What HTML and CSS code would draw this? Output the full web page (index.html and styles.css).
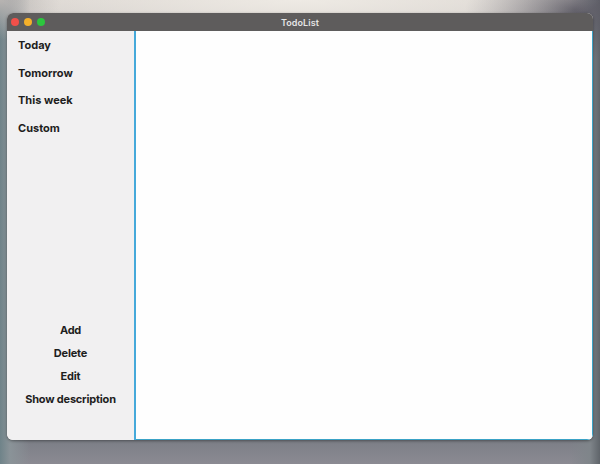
FILE: index.html
```html
<!DOCTYPE html>
<html>
<head>
<meta charset="utf-8">
<link rel="stylesheet" href="styles.css">
</head>
<body>
<div class="window">
  <div class="titlebar">
    <div class="lights">
      <span class="light red"></span>
      <span class="light yellow"></span>
      <span class="light green"></span>
    </div>
    <div class="title">TodoList</div>
  </div>
  <div class="main">
    <aside class="sidebar">
      <ul class="filters">
        <li>Today</li>
        <li>Tomorrow</li>
        <li>This week</li>
        <li>Custom</li>
      </ul>
      <ul class="actions">
        <li>Add</li>
        <li>Delete</li>
        <li>Edit</li>
        <li>Show description</li>
      </ul>
    </aside>
    <section class="content"></section>
  </div>
</div>
</body>
</html>
```

FILE: styles.css
```css
html, body {
  margin: 0;
  padding: 0;
  height: 100%;
}
body {
  width: 600px;
  height: 464px;
  overflow: hidden;
  background:
    radial-gradient(ellipse 300px 40px at 300px 0px, #eeeae4 0%, rgba(238,234,228,0) 100%),
    radial-gradient(ellipse 110px 50px at 575px 10px, #5e5c66 0%, rgba(94,92,102,0) 100%),
    radial-gradient(ellipse 60px 40px at 0px 0px, #b8b4b2 0%, rgba(184,180,178,0) 100%),
    linear-gradient(90deg, #6f8389 0px, #8a9398 10px, rgba(138,147,152,0) 30px),
    linear-gradient(270deg, #5f646a 0px, #7f858a 10px, rgba(127,133,138,0) 30px),
    linear-gradient(180deg, #dcd7d2 0%, #c4c2c2 15%, #9ea2a6 50%, #8a8f94 85%, #7c7f87 95%, #8b8a92 100%);
  font-family: "Inter", "Open Sans", "Liberation Sans", sans-serif;
  padding: 13px 7px 0 7px;
  box-sizing: border-box;
}
.window {
  width: 586px;
  height: 427px;
  border-radius: 6px;
  overflow: hidden;
  display: flex;
  flex-direction: column;
  box-shadow: 0 1px 3px rgba(0,0,0,0.4);
  background: #f0eff0;
}
.titlebar {
  height: 18px;
  flex: none;
  background: #5e5c5c;
  position: relative;
  display: flex;
  align-items: center;
}
.lights {
  display: flex;
  gap: 5px;
  padding-left: 4px;
}
.light {
  width: 8px;
  height: 8px;
  border-radius: 50%;
  display: block;
}
.red { background: #f0504a; }
.yellow { background: #f4b02a; }
.green { background: #2cc63e; }
.title {
  position: absolute;
  left: 0;
  right: 0;
  text-align: center;
  color: #e4e4e4;
  font-size: 9px;
  font-weight: 600;
  top: 4px;
  letter-spacing: 0.1px;
}
.main {
  flex: 1;
  display: flex;
  min-height: 0;
}
.sidebar {
  width: 127px;
  flex: none;
  background: #f1f0f1;
  display: flex;
  flex-direction: column;
  justify-content: space-between;
  border-right: 2px solid #45a9da;
}
.sidebar ul {
  list-style: none;
  margin: 0;
  padding: 0;
  color: #1e1e1e;
  font-weight: 700;
  font-size: 11px;
}
.filters {
  padding-left: 11px !important;
  padding-top: 1px !important;
}
.filters li {
  height: 27.5px;
  line-height: 27.5px;
}
.actions {
  text-align: center;
  padding-bottom: 29px !important;
  letter-spacing: -0.2px;
}
.actions li {
  height: 23px;
  line-height: 23px;
}
.content {
  flex: 1;
  background: #fefefe;
  border-right: 1px solid #3aa2c6;
  border-bottom: 1px solid #3aa2c6;
}
```
